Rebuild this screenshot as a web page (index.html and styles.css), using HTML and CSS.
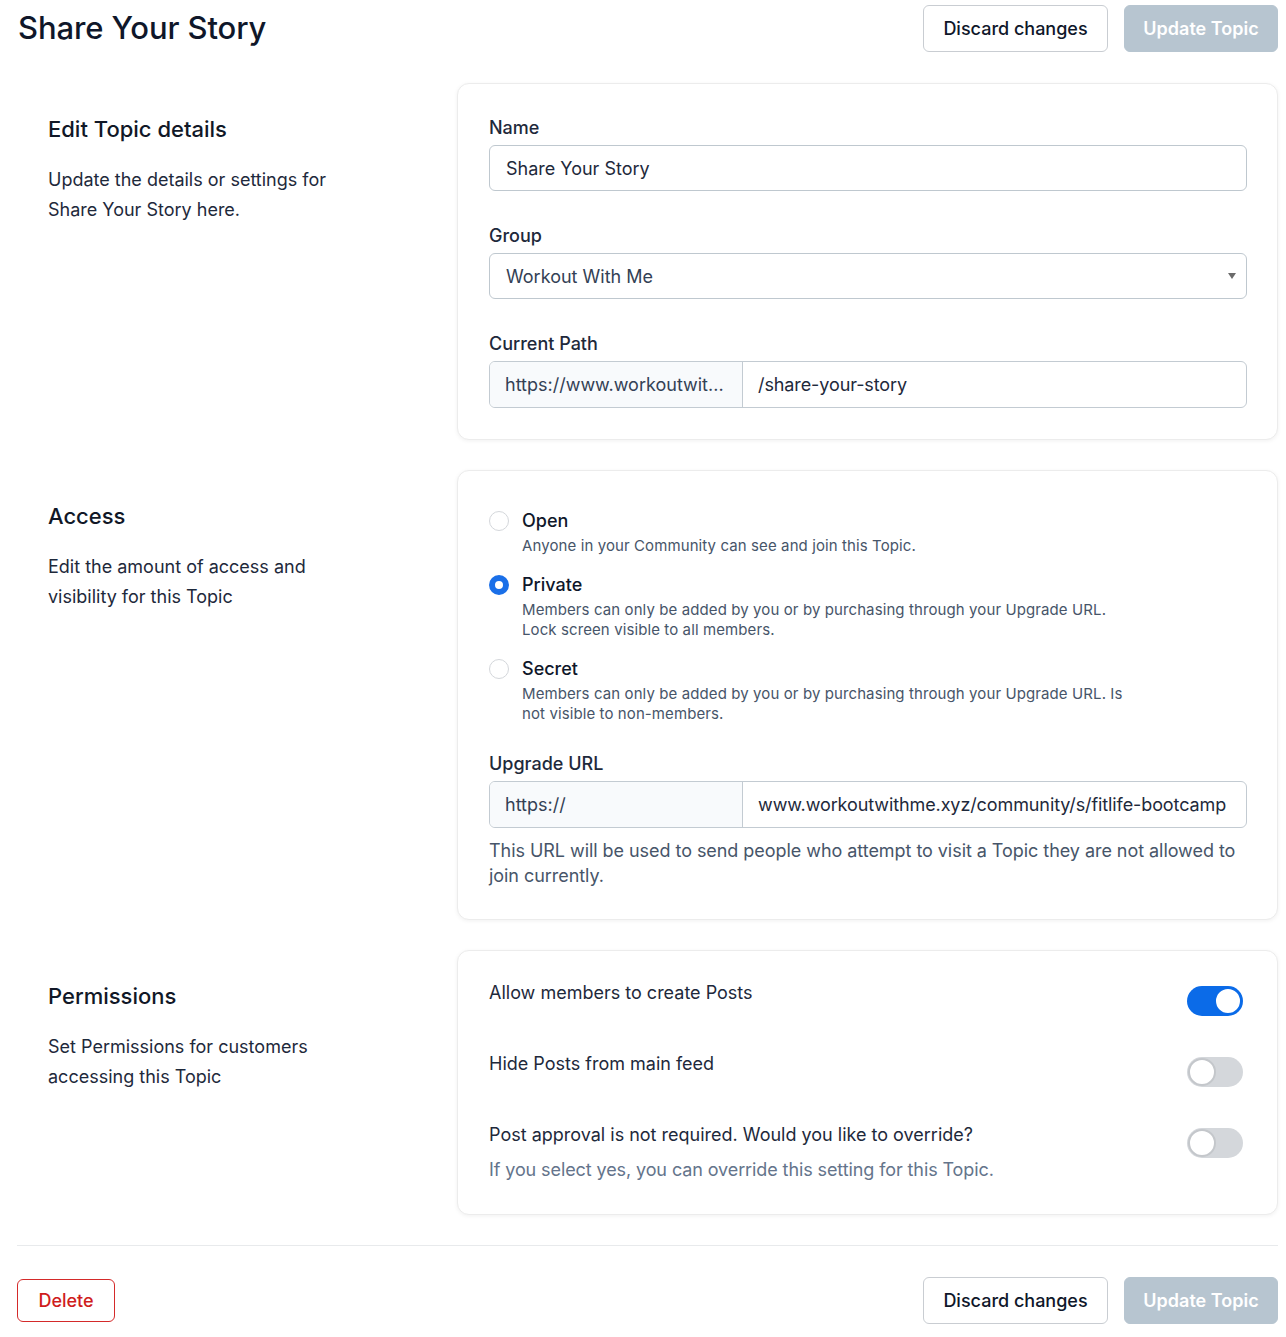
FILE: index.html
```html
<!DOCTYPE html>
<html lang="en">
<head>
<meta charset="utf-8">
<title>Share Your Story</title>
<link rel="stylesheet" href="styles.css">
</head>
<body>
<div class="page">
  <header class="top-bar">
    <h1 class="page-title">Share Your Story</h1>
    <div class="actions">
      <button class="btn btn-outline">Discard changes</button>
      <button class="btn btn-primary" disabled>Update Topic</button>
    </div>
  </header>

  <section class="section">
    <div class="section-info">
      <h2 class="section-title">Edit Topic details</h2>
      <p class="section-desc">Update the details or settings for<br>Share Your Story here.</p>
    </div>
    <div class="card">
      <div class="field">
        <label class="field-label">Name</label>
        <div class="input">Share Your Story</div>
      </div>
      <div class="field">
        <label class="field-label">Group</label>
        <div class="input select">
          <span class="select-value">Workout With Me</span>
          <span class="caret"></span>
        </div>
      </div>
      <div class="field">
        <label class="field-label">Current Path</label>
        <div class="input-group">
          <div class="addon">https://www.workoutwit...</div>
          <div class="addon-value">/share-your-story</div>
        </div>
      </div>
    </div>
  </section>

  <section class="section">
    <div class="section-info">
      <h2 class="section-title">Access</h2>
      <p class="section-desc">Edit the amount of access and<br>visibility for this Topic</p>
    </div>
    <div class="card">
      <div class="radio-list">
        <div class="radio-option">
          <span class="radio"></span>
          <div class="radio-text">
            <div class="radio-label">Open</div>
            <div class="radio-desc">Anyone in your Community can see and join this Topic.</div>
          </div>
        </div>
        <div class="radio-option">
          <span class="radio checked"></span>
          <div class="radio-text">
            <div class="radio-label">Private</div>
            <div class="radio-desc">Members can only be added by you or by purchasing through your Upgrade URL.<br>Lock screen visible to all members.</div>
          </div>
        </div>
        <div class="radio-option">
          <span class="radio"></span>
          <div class="radio-text">
            <div class="radio-label">Secret</div>
            <div class="radio-desc">Members can only be added by you or by purchasing through your Upgrade URL. Is<br>not visible to non-members.</div>
          </div>
        </div>
      </div>
      <div class="field upgrade">
        <label class="field-label">Upgrade URL</label>
        <div class="input-group">
          <div class="addon">https://</div>
          <div class="addon-value">www.workoutwithme.xyz/community/s/fitlife-bootcamp</div>
        </div>
        <p class="help">This URL will be used to send people who attempt to visit a Topic they are not allowed to join currently.</p>
      </div>
    </div>
  </section>

  <section class="section">
    <div class="section-info">
      <h2 class="section-title">Permissions</h2>
      <p class="section-desc">Set Permissions for customers<br>accessing this Topic</p>
    </div>
    <div class="card card-perms">
      <div class="perm-row">
        <div class="perm-text">Allow members to create Posts</div>
        <span class="toggle on"><span class="knob"></span></span>
      </div>
      <div class="perm-row">
        <div class="perm-text">Hide Posts from main feed</div>
        <span class="toggle"><span class="knob"></span></span>
      </div>
      <div class="perm-row">
        <div>
          <div class="perm-text">Post approval is not required. Would you like to override?</div>
          <div class="perm-desc">If you select yes, you can override this setting for this Topic.</div>
        </div>
        <span class="toggle"><span class="knob"></span></span>
      </div>
    </div>
  </section>

  <footer class="footer">
    <button class="btn btn-danger">Delete</button>
    <div class="actions">
      <button class="btn btn-outline">Discard changes</button>
      <button class="btn btn-primary" disabled>Update Topic</button>
    </div>
  </footer>
</div>
</body>
</html>
```

FILE: styles.css
```css
* { box-sizing: border-box; }

body {
  margin: 0;
  background: #ffffff;
  font-family: Inter, "Noto Sans", sans-serif;
  color: #1e293b;
}

.page {
  padding: 5px 8px 10px 17px;
}

/* header */
.top-bar {
  display: flex;
  align-items: center;
  justify-content: space-between;
  height: 47px;
}

.page-title {
  margin: 0 0 0 1px;
  font-size: 31px;
  font-weight: 500;
  color: #0f172a;
  letter-spacing: -0.1px;
  position: relative;
  top: -1px;
}

.actions {
  display: flex;
  gap: 16px;
}

.btn {
  font-family: inherit;
  font-size: 18px;
  font-weight: 500;
  height: 47px;
  border-radius: 6px;
  padding: 0;
  white-space: nowrap;
  cursor: pointer;
}

.btn-outline {
  width: 185px;
  background: #fff;
  border: 1px solid #c9cdd2;
  color: #0f172a;
}

.btn-primary {
  width: 154px;
  background: #b7c5d0;
  border: 1px solid #b7c5d0;
  color: #fff;
  font-weight: 600;
}

.btn-danger {
  width: 98px;
  height: 43px;
  background: #fff;
  border: 1px solid #d42a2a;
  color: #cf1d1d;
}

/* sections */
.section {
  display: grid;
  grid-template-columns: 440px 1fr;
  margin-top: 31px;
}

.section + .section { margin-top: 30px; }

.section-info {
  padding: 32px 0 0 31px;
}

.section-title {
  margin: 0;
  font-size: 22px;
  line-height: 28px;
  font-weight: 500;
  color: #111827;
}

.section-desc {
  margin: 22px 0 0;
  font-size: 18px;
  line-height: 30px;
  color: #1e293b;
}

.card {
  background: #fff;
  border: 1px solid #ececec;
  border-radius: 12px;
  box-shadow: 0 1px 4px rgba(0, 0, 0, 0.06);
  padding: 31px 30px 31px 31px;
}

/* fields */
.field + .field { margin-top: 32px; }

.field-label {
  display: block;
  font-size: 18px;
  line-height: 24px;
  font-weight: 500;
  color: #1e293b;
  padding-top: 1px;
  margin-bottom: 5px;
}

.input {
  height: 46px;
  border: 1px solid #bfc8cf;
  border-radius: 6px;
  padding: 0 16px;
  display: flex;
  align-items: center;
  font-size: 18px;
  color: #1e293b;
}

.select {
  justify-content: space-between;
  color: #334155;
}

.caret {
  width: 0;
  height: 0;
  border-left: 4.5px solid transparent;
  border-right: 4.5px solid transparent;
  border-top: 6px solid #6b6b6b;
  margin-right: -6px;
}

.input-group {
  display: flex;
  height: 47px;
  border: 1px solid #c3cbd2;
  border-radius: 6px;
  overflow: hidden;
  font-size: 18px;
}

.addon {
  width: 253px;
  flex: none;
  background: #f8fafc;
  border-right: 1px solid #c3cbd2;
  padding: 0 15px;
  display: flex;
  align-items: center;
  color: #334155;
}

.addon-value {
  flex: 1;
  padding: 0 15px;
  display: flex;
  align-items: center;
  color: #1e293b;
  white-space: nowrap;
  letter-spacing: -0.1px;
}

/* radios */
.radio-list {
  display: flex;
  flex-direction: column;
  gap: 16px;
  padding-top: 6px;
}

.radio-option {
  display: flex;
  gap: 13px;
}

.radio {
  flex: none;
  width: 20px;
  height: 20px;
  border-radius: 50%;
  border: 1px solid #d4d7db;
  background: #fff;
  margin-top: 3px;
}

.radio.checked {
  border: 6px solid #1a6fe8;
}

.radio-label {
  font-size: 18px;
  line-height: 26px;
  font-weight: 500;
  color: #0f172a;
  margin-bottom: 2px;
}

.radio-desc {
  font-size: 15px;
  line-height: 20px;
  color: #475569;
  letter-spacing: 0.1px;
}

.upgrade { margin-top: 27px; }

.help {
  margin: 10px 0 0;
  font-size: 18px;
  line-height: 25px;
  color: #475569;
  letter-spacing: -0.05px;
}

/* permissions */
.card-perms {
  display: flex;
  flex-direction: column;
  gap: 36px;
  padding-top: 30px;
  padding-bottom: 32px;
}

.perm-row {
  display: flex;
  justify-content: space-between;
  align-items: flex-start;
}

.perm-text {
  font-size: 18px;
  line-height: 24px;
  color: #1e293b;
}

.perm-desc {
  margin-top: 11px;
  font-size: 18px;
  line-height: 24px;
  color: #64748b;
  letter-spacing: -0.1px;
}

.toggle {
  flex: none;
  width: 56px;
  height: 30px;
  border-radius: 15px;
  background: #d4d7db;
  margin-top: 5px;
  margin-right: 4px;
  display: flex;
  align-items: center;
  padding: 0 1px;
}

.knob {
  width: 28px;
  height: 28px;
  border-radius: 50%;
  background: #fff;
  border: 2px solid #c4c7cb;
}

.toggle.on {
  background: #0b6be8;
  justify-content: flex-end;
}

.toggle.on .knob {
  border-color: #0b6be8;
}

/* footer */
.footer {
  margin-top: 30px;
  border-top: 1px solid #e8eaec;
  padding-top: 31px;
  display: flex;
  justify-content: space-between;
  align-items: center;
}
```
